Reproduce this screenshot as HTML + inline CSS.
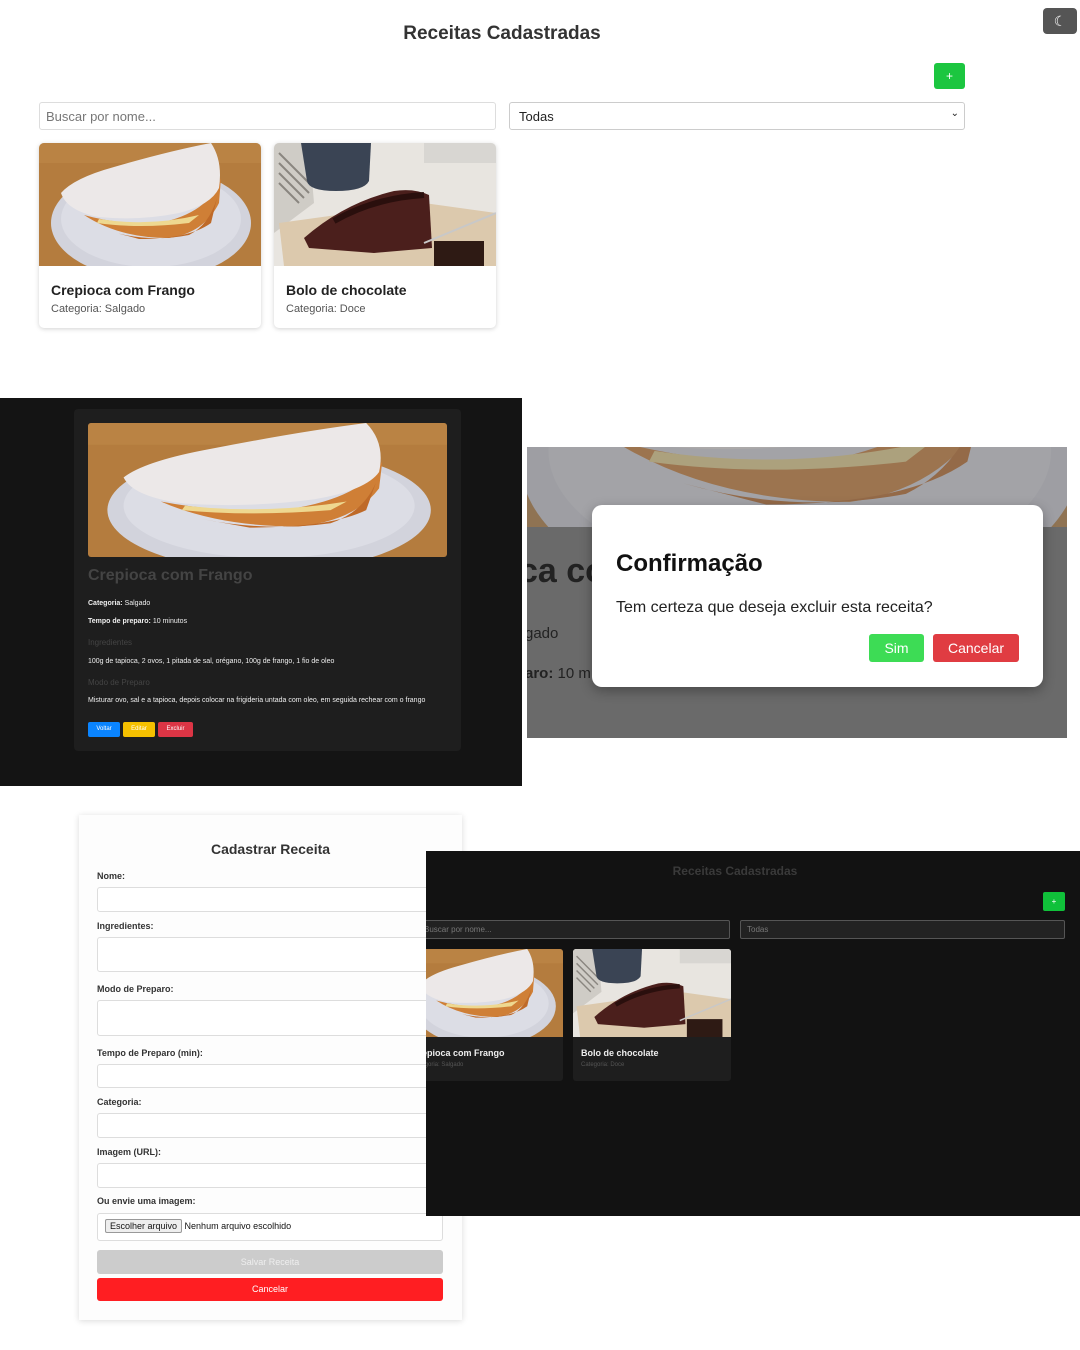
<!DOCTYPE html>
<html><head><meta charset="utf-8"><style>
*{box-sizing:border-box;margin:0;padding:0}
body{width:1080px;height:1350px;background:#fff;position:relative;overflow:hidden;font-family:"Liberation Sans",Arial,sans-serif}
.a{position:absolute}
.img svg{display:block;width:100%;height:100%}
.inp{position:absolute;border:1px solid #ddd;border-radius:3px;background:#fff}
.lbl{position:absolute;left:97px;font-size:9px;font-weight:bold;color:#333}
</style></head><body>
<svg width="0" height="0" style="position:absolute">
<defs>
<symbol id="crep" viewBox="0 0 222 123" preserveAspectRatio="none">
<rect width="222" height="123" fill="#b47c3e"/>
<rect x="0" y="0" width="222" height="20" fill="#c08a4a" opacity=".5"/>
<ellipse cx="112" cy="80" rx="100" ry="56" fill="#d2d3dc"/>
<ellipse cx="112" cy="76" rx="90" ry="48" fill="#dcdde5"/>
<path d="M45 72 Q80 95 130 95 Q165 90 180 60 L182 35 Q170 70 120 80 Q80 82 45 72Z" fill="#cf7f36"/>
<path d="M70 88 Q110 100 150 92 Q170 82 178 55 L172 80 Q150 96 100 96Z" fill="#bf6a28"/>
<path d="M58 80 Q100 86 150 80 L160 72 Q110 84 60 76Z" fill="#eed890"/>
<path d="M22 50 Q35 35 75 24 Q130 8 172 0 Q184 18 180 45 Q172 62 140 70 Q100 78 60 74 Q28 68 22 50Z" fill="#ece8e8"/>
</symbol>
<symbol id="cake" viewBox="0 0 222 123" preserveAspectRatio="none">
<rect width="222" height="123" fill="#e8e5e0"/>
<rect x="150" y="0" width="72" height="20" fill="#d8d6d2"/>
<path d="M0 0 L35 0 L40 60 L0 90Z" fill="#cfccc6"/>
<path d="M5 10 L35 40 M5 20 L35 50 M5 30 L30 55 M5 40 L25 60" stroke="#8a8680" stroke-width="2"/>
<path d="M27 0 L97 0 L95 38 Q90 48 62 48 Q35 48 33 38Z" fill="#3a4454"/>
<path d="M5 80 L150 60 L222 70 L222 123 L10 123Z" fill="#dcc9ad"/>
<path d="M30 95 Q70 60 120 48 Q140 45 155 52 L158 105 L100 110 L35 105Z" fill="#4b1f1c"/>
<path d="M60 78 Q100 55 150 52" stroke="#2a0f0d" stroke-width="6" fill="none"/>
<rect x="160" y="98" width="50" height="25" fill="#2e1a14"/>
<path d="M150 100 L222 70" stroke="#c8c8c8" stroke-width="2"/>
</symbol>
</defs></svg>

<div class="a" style="left:0;top:23px;width:1004px;text-align:center;font-size:19px;font-weight:bold;color:#333">Receitas Cadastradas</div>
<div class="a" style="left:1043px;top:8px;width:34px;height:26px;background:#555;border-radius:4px;color:#fff;font-size:14px;text-align:center;line-height:26px">☾</div>
<div class="a" style="left:934px;top:63px;width:31px;height:26px;background:#1cc640;border-radius:3px;color:#fff;font-size:12px;text-align:center;line-height:26px">+</div>
<div class="inp" style="left:39px;top:102px;width:457px;height:28px;font-size:13px;color:#777;padding:6px 6px">Buscar por nome...</div>
<div class="inp" style="left:509px;top:102px;width:456px;height:28px;font-size:13px;color:#222;padding:6px 9px;border-color:#ccc">Todas<span style="position:absolute;right:5px;top:5px;font-size:10px">⌄</span></div>
<div class="a" style="left:39px;top:143px;width:222px;height:185px;border-radius:5px;box-shadow:0 1px 5px rgba(0,0,0,.18);overflow:hidden;background:#fff">
<div class="img" style="height:123px"><svg><use href="#crep"/></svg></div>
<div style="padding:16px 12px 0;font-size:14px;font-weight:bold;color:#222">Crepioca com Frango</div>
<div style="padding:5px 12px;font-size:11px;color:#555">Categoria: Salgado</div></div>
<div class="a" style="left:274px;top:143px;width:222px;height:185px;border-radius:5px;box-shadow:0 1px 5px rgba(0,0,0,.18);overflow:hidden;background:#fff">
<div class="img" style="height:123px"><svg><use href="#cake"/></svg></div>
<div style="padding:16px 12px 0;font-size:14px;font-weight:bold;color:#222">Bolo de chocolate</div>
<div style="padding:5px 12px;font-size:11px;color:#555">Categoria: Doce</div></div>

<div class="a" style="left:0;top:398px;width:522px;height:388px;background:#141414"></div>
<div class="a" style="left:74px;top:409px;width:387px;height:342px;background:#1e1e1e;border-radius:4px"></div>
<div class="a img" style="left:88px;top:423px;width:359px;height:134px;border-radius:3px;overflow:hidden"><svg><use href="#crep"/></svg></div>
<div class="a" style="left:88px;top:567px;font-size:16px;font-weight:bold;color:#444">Crepioca com Frango</div>
<div class="a" style="left:88px;top:600px;font-size:7px;color:#eee"><b>Categoria:</b> Salgado</div>
<div class="a" style="left:88px;top:618px;font-size:7px;color:#eee"><b>Tempo de preparo:</b> 10 minutos</div>
<div class="a" style="left:88px;top:638px;font-size:8px;color:#444">Ingredientes</div>
<div class="a" style="left:88px;top:658px;font-size:7px;color:#eee">100g de tapioca, 2 ovos, 1 pitada de sal, orégano, 100g de frango, 1 fio de oleo</div>
<div class="a" style="left:88px;top:678px;font-size:8px;color:#444">Modo de Preparo</div>
<div class="a" style="left:88px;top:697px;font-size:7px;color:#eee">Misturar ovo, sal e a tapioca, depois colocar na frigideria untada com oleo, em seguida rechear com o frango</div>
<div class="a" style="left:88px;top:722px;width:32px;height:15px;background:#0a84ff;border-radius:2px;color:#fff;font-size:6px;text-align:center;line-height:15px">Voltar</div>
<div class="a" style="left:123px;top:722px;width:32px;height:15px;background:#f5c000;border-radius:2px;color:#fff;font-size:6px;text-align:center;line-height:15px">Editar</div>
<div class="a" style="left:158px;top:722px;width:35px;height:15px;background:#dc3545;border-radius:2px;color:#fff;font-size:6px;text-align:center;line-height:15px">Excluir</div>

<div class="a" style="left:527px;top:447px;width:540px;height:291px;background:#6a6a6a;overflow:hidden">
<div style="position:absolute;left:0;top:0;width:540px;height:80px;overflow:hidden">
<div class="img" style="position:absolute;left:-40px;top:-200px;width:620px;height:330px;opacity:.5"><svg><use href="#crep"/></svg></div></div>
<div style="position:absolute;left:-8px;top:105px;font-size:34px;font-weight:bold;color:#222">ca co</div>
<div style="position:absolute;left:-2px;top:178px;font-size:15px;color:#222">gado</div>
<div style="position:absolute;left:-2px;top:218px;font-size:15px;color:#222"><b>aro:</b> 10 m</div>
</div>
<div class="a" style="left:592px;top:505px;width:451px;height:182px;background:#fff;border-radius:10px;box-shadow:0 4px 12px rgba(0,0,0,.3)"></div>
<div class="a" style="left:616px;top:550px;font-size:24px;font-weight:bold;color:#111">Confirmação</div>
<div class="a" style="left:616px;top:599px;font-size:16px;color:#222">Tem certeza que deseja excluir esta receita?</div>
<div class="a" style="left:869px;top:634px;width:55px;height:28px;background:#3ddc55;border-radius:3px;color:#fff;font-size:14px;text-align:center;line-height:28px">Sim</div>
<div class="a" style="left:933px;top:634px;width:86px;height:28px;background:#e03c42;border-radius:3px;color:#fff;font-size:14px;text-align:center;line-height:28px">Cancelar</div>

<div class="a" style="left:79px;top:815px;width:383px;height:505px;background:#fdfdfd;box-shadow:0 1px 6px rgba(0,0,0,.15)"></div>
<div class="a" style="left:79px;top:841px;width:383px;text-align:center;font-size:14px;font-weight:bold;color:#333">Cadastrar Receita</div>
<div class="lbl" style="top:871px">Nome:</div><div class="inp" style="left:97px;top:887px;width:346px;height:25px"></div>
<div class="lbl" style="top:921px">Ingredientes:</div><div class="inp" style="left:97px;top:937px;width:346px;height:35px"></div>
<div class="lbl" style="top:984px">Modo de Preparo:</div><div class="inp" style="left:97px;top:1000px;width:346px;height:36px"></div>
<div class="lbl" style="top:1048px">Tempo de Preparo (min):</div><div class="inp" style="left:97px;top:1064px;width:346px;height:24px"></div>
<div class="lbl" style="top:1097px">Categoria:</div><div class="inp" style="left:97px;top:1113px;width:346px;height:25px"></div>
<div class="lbl" style="top:1147px">Imagem (URL):</div><div class="inp" style="left:97px;top:1163px;width:346px;height:25px"></div>
<div class="lbl" style="top:1196px">Ou envie uma imagem:</div>
<div class="inp" style="left:97px;top:1213px;width:346px;height:28px;font-size:9px;color:#111;padding:7px 7px"><span style="border:1px solid #999;background:#eee;padding:1px 4px;border-radius:2px">Escolher arquivo</span> Nenhum arquivo escolhido</div>
<div class="a" style="left:97px;top:1250px;width:346px;height:24px;background:#ccc;border-radius:3px;color:#eee;font-size:9px;text-align:center;line-height:24px">Salvar Receita</div>
<div class="a" style="left:97px;top:1278px;width:346px;height:23px;background:#ff1e22;border-radius:3px;color:#fff;font-size:9px;text-align:center;line-height:23px">Cancelar</div>

<div class="a" style="left:426px;top:851px;width:654px;height:365px;background:#121212;overflow:hidden">
<div style="position:absolute;left:0;top:13px;width:618px;text-align:center;font-size:12px;font-weight:bold;color:#3a3a3a">Receitas Cadastradas</div>
<div style="position:absolute;left:617px;top:41px;width:22px;height:19px;background:#10c13a;border-radius:2px;color:#fff;font-size:8px;text-align:center;line-height:19px">+</div>
<div style="position:absolute;left:-10px;top:69px;width:314px;height:19px;border:1px solid #555;border-radius:2px;background:#222;color:#777;font-size:8px;padding:4px 0 0 7px">Buscar por nome...</div>
<div style="position:absolute;left:314px;top:69px;width:325px;height:19px;border:1px solid #555;border-radius:2px;background:#222;color:#777;font-size:8px;padding:4px 6px">Todas</div>
<div style="position:absolute;left:-22px;top:98px;width:159px;height:132px;background:#1e1e1e;border-radius:3px;overflow:hidden">
<div class="img" style="height:88px"><svg><use href="#crep"/></svg></div>
<div style="padding:11px 8px 0;font-size:9px;font-weight:bold;color:#eee">Crepioca com Frango</div>
<div style="padding:4px 8px;font-size:6px;color:#555">Categoria: Salgado</div></div>
<div style="position:absolute;left:147px;top:98px;width:158px;height:132px;background:#1e1e1e;border-radius:3px;overflow:hidden">
<div class="img" style="height:88px"><svg><use href="#cake"/></svg></div>
<div style="padding:11px 8px 0;font-size:9px;font-weight:bold;color:#eee">Bolo de chocolate</div>
<div style="padding:4px 8px;font-size:6px;color:#555">Categoria: Doce</div></div>
</div>
</body></html>
